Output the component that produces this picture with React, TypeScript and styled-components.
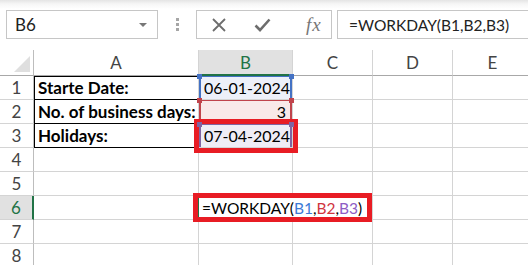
import React from 'react';
import styled, { createGlobalStyle } from 'styled-components';

const GlobalStyle = createGlobalStyle`
    html, body {
        margin: 0;
        padding: 0;
        background: #fff;
    }
    body {
        width: 528px;
        height: 265px;
        overflow: hidden;
        font-family: Lato, "Liberation Sans", sans-serif;
    }
`

const GRID = '#d4d4d4';
const GREEN = '#217346';
const ANNOTATE = '#e81c24';

const Toolbar = styled.div`
    height: 50px;
    box-sizing: border-box;
    padding: 10px 0 0 6px;
    display: flex;
    align-items: flex-start;
    overflow: hidden;
    background: linear-gradient(#e4e4e4 0px, #f6f6f6 4px, #fff 9px);
    & > * {
        flex-shrink: 0;
    }
`

const NameBox = styled.div`
    width: 152px;
    height: 29px;
    box-sizing: border-box;
    border: 1px solid #c6c6c6;
    background: #fff;
    display: flex;
    align-items: center;
    padding: 0 8px;
    font-size: 17px;
    color: #222;
`

const NameText = styled.span`
    flex: 1;
`

const DropArrow = styled.span`
    width: 0;
    height: 0;
    border-left: 4px solid transparent;
    border-right: 4px solid transparent;
    border-top: 4px solid #777;
    margin-right: 2px;
`

const Grip = styled.div`
    width: 38px;
    height: 29px;
    display: flex;
    flex-direction: column;
    align-items: center;
    justify-content: center;
    gap: 2px;
`

const GripDot = styled.span`
    width: 3px;
    height: 3px;
    background: #a6a6a6;
`

const ButtonsBox = styled.div`
    width: 136px;
    height: 29px;
    box-sizing: border-box;
    border: 1px solid #c6c6c6;
    background: #fff;
    display: flex;
    align-items: center;
    padding-left: 14px;
    gap: 27px;
`

const Fx = styled.span`
    font-family: "Liberation Serif", serif;
    font-style: italic;
    font-size: 19px;
    color: #777;
    letter-spacing: 1px;
    margin-left: 8px;
`

const FormulaInput = styled.div`
    width: 220px;
    height: 29px;
    box-sizing: border-box;
    margin-left: 5px;
    border: 1px solid #c6c6c6;
    background: #fff;
    display: flex;
    align-items: center;
    padding-left: 11px;
    font-size: 15.5px;
    color: #222;
    white-space: nowrap;
`

const Sheet = styled.div`
    display: grid;
    grid-template-columns: 34px 165px 94px 80px 80px 80px;
    grid-template-rows: 26px repeat(8, 24px);
`

const Cell = styled.div<{ $span?: number; $bottom?: string }>`
    box-sizing: border-box;
    border-right: 1px solid ${GRID};
    border-bottom: 1px solid ${p => p.$bottom || GRID};
    grid-column: span ${p => p.$span || 1};
    display: flex;
    align-items: center;
    font-size: 16px;
    color: #000;
    white-space: nowrap;
    position: relative;
`

const Corner = styled.div`
    box-sizing: border-box;
    border-right: 1px solid #bdbdbd;
    border-bottom: 1px solid #a8a8a8;
    display: flex;
    align-items: flex-end;
    justify-content: flex-end;
    padding: 0 3px 3px 0;
`

const CornerTriangle = styled.span`
    width: 0;
    height: 0;
    border-left: 16px solid transparent;
    border-bottom: 16px solid #dfdfdf;
`

const ColHead = styled.div<{ $active?: boolean }>`
    box-sizing: border-box;
    border-right: 1px solid ${GRID};
    border-bottom: ${p => (p.$active ? `2px solid ${GREEN}` : '1px solid #a8a8a8')};
    background: ${p => (p.$active ? '#e1e1e1' : '#fff')};
    color: ${p => (p.$active ? GREEN : '#444')};
    display: flex;
    align-items: center;
    justify-content: center;
    padding-top: ${p => (p.$active ? '1px' : '0')};
    font-size: 17px;
`

const RowHead = styled.div<{ $active?: boolean }>`
    box-sizing: border-box;
    border-right: ${p => (p.$active ? `2px solid ${GREEN}` : '1px solid #bdbdbd')};
    border-bottom: 1px solid ${GRID};
    background: ${p => (p.$active ? '#e1e1e1' : '#fff')};
    color: ${p => (p.$active ? GREEN : '#444')};
    display: flex;
    align-items: center;
    justify-content: center;
    font-size: 17px;
`

const Label = styled(Cell)<{ $first?: boolean }>`
    font-weight: 700;
    font-size: 17px;
    padding-left: 4px;
    box-shadow: inset 1px 0 0 #000 ${p => (p.$first ? ', inset 0 1px 0 #000' : '')};
`

const RefCell = styled(Cell)<{ $color: string; $bg: string; $align?: string }>`
    background: ${p => p.$bg};
    box-shadow: inset 2px 0 0 ${p => p.$color}, inset -2px 0 0 ${p => p.$color}, inset 0 1px 0 ${p => p.$color};
    justify-content: ${p => p.$align || 'flex-start'};
    padding: 0 6px 0 5px;
    &::before, &::after {
        content: '';
        position: absolute;
        top: -2px;
        width: 5px;
        height: 5px;
        background: ${p => p.$color};
    }
    &::before { left: -2px; }
    &::after { right: -2px; }
`

const Marked = styled(RefCell)`
    outline: 5px solid ${ANNOTATE};
    z-index: 2;
`

const Editor = styled.div`
    width: 169px;
    height: 19px;
    margin-left: -1px;
    box-sizing: border-box;
    background: #fff;
    border-left: 1px solid ${GREEN};
    outline: 5px solid ${ANNOTATE};
    display: flex;
    align-items: center;
    padding-left: 3px;
    font-size: 15.5px;
    z-index: 2;
`

const Ref = styled.span<{ $color: string }>`
    color: ${p => p.$color};
`

const CloseIcon = () => (
    <svg width="16" height="14" viewBox="0 0 16 14">
        <path d="M2 1 L14 13 M14 1 L2 13" stroke="#6d6d6d" strokeWidth="1.8" fill="none" />
    </svg>
)

const CheckIcon = () => (
    <svg width="17" height="14" viewBox="0 0 17 14">
        <path d="M1.5 7.5 L6 12 L15.5 1.5" stroke="#6d6d6d" strokeWidth="2.6" fill="none" />
    </svg>
)

const columns = ['A', 'B', 'C', 'D', 'E'];

const Blank = ({ n }: { n: number }) => (
    <>
        {Array.from({ length: n }).map((_, i) => <Cell key={i} />)}
    </>
)

export default function App() {
    return (
        <>
            <GlobalStyle />
            <Toolbar>
                <NameBox>
                    <NameText>B6</NameText>
                    <DropArrow />
                </NameBox>
                <Grip>
                    <GripDot />
                    <GripDot />
                    <GripDot />
                </Grip>
                <ButtonsBox>
                    <CloseIcon />
                    <CheckIcon />
                    <Fx>fx</Fx>
                </ButtonsBox>
                <FormulaInput>=WORKDAY(B1,B2,B3)</FormulaInput>
            </Toolbar>
            <Sheet>
                <Corner><CornerTriangle /></Corner>
                {columns.map(c => <ColHead key={c} $active={c === 'B'}>{c}</ColHead>)}

                <RowHead>1</RowHead>
                <Label $first $bottom="#000">Starte Date:</Label>
                <RefCell $color="#4472c4" $bg="#edf0f9">06-01-2024</RefCell>
                <Blank n={3} />

                <RowHead>2</RowHead>
                <Label $bottom="#000">No. of business days:</Label>
                <RefCell $color="#c0444c" $bg="#f9e9e9" $align="flex-end">3</RefCell>
                <Blank n={3} />

                <RowHead>3</RowHead>
                <Label $bottom="#000">Holidays:</Label>
                <Marked $color="#8064a2" $bg="#efedf6">07-04-2024</Marked>
                <Blank n={3} />

                <RowHead>4</RowHead>
                <Blank n={5} />

                <RowHead>5</RowHead>
                <Blank n={5} />

                <RowHead $active>6</RowHead>
                <Cell />
                <Cell $span={2}>
                    <Editor>
                        =WORKDAY(<Ref $color="#3c7ad6">B1</Ref>,<Ref $color="#d0353f">B2</Ref>,<Ref $color="#8e5cc4">B3</Ref>)
                    </Editor>
                </Cell>
                <Blank n={2} />

                <RowHead>7</RowHead>
                <Blank n={5} />

                <RowHead>8</RowHead>
                <Blank n={5} />
            </Sheet>
        </>
    );
}
